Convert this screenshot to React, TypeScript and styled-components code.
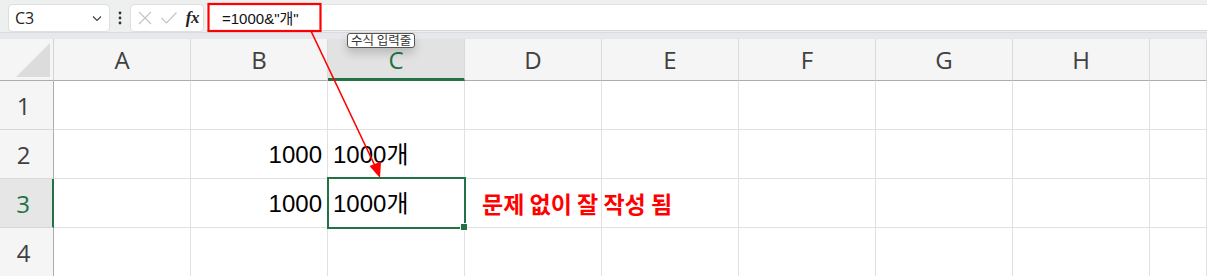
import React from "react";
import styled, { createGlobalStyle } from "styled-components";

const GlobalStyle = createGlobalStyle`
  html, body {
    margin: 0;
    padding: 0;
    background: #ffffff;
    overflow: hidden;
  }
  * {
    box-sizing: border-box;
  }
`;

const COLUMNS = ["A", "B", "C", "D", "E", "F", "G", "H", ""];
const SELECTED_COL = "C";
const SELECTED_ROW = 3;

type Row = { n: number; b?: string; c?: string; note?: string };
const ROWS: Row[] = [
  { n: 1 },
  { n: 2, b: "1000", c: "1000개" },
  { n: 3, b: "1000", c: "1000개", note: "문제 없이 잘 작성 됨" },
  { n: 4 },
];

const Page = styled.div`
  position: relative;
  width: 1207px;
  height: 276px;
  overflow: hidden;
  background: #ffffff;
`;

const FormulaBar = styled.div`
  display: flex;
  align-items: flex-start;
  height: 32px;
  padding: 4px 0 0 8px;
  background: #eef0ef;
`;

const NameBox = styled.div`
  display: flex;
  align-items: center;
  justify-content: space-between;
  width: 102px;
  height: 28px;
  padding: 0 6px 0 6px;
  background: #ffffff;
  border: 1px solid #dcdfde;
  border-radius: 4px;
  font-family: "Open Sans", sans-serif;
  font-size: 16px;
  color: #222;
`;

const MoreDots = styled.div`
  width: 20px;
  height: 28px;
  display: flex;
  align-items: center;
  justify-content: center;
`;

const FxButtons = styled.div`
  display: flex;
  align-items: center;
  justify-content: space-between;
  width: 74px;
  height: 28px;
  padding: 0 4px 0 6px;
  background: #ffffff;
  border: 1px solid #dcdfde;
  border-radius: 4px;
`;

const FxLabel = styled.span`
  font-family: "Liberation Serif", serif;
  font-style: italic;
  font-weight: bold;
  font-size: 17px;
  color: #222;
  letter-spacing: -0.5px;
`;

const FormulaInput = styled.div`
  flex: 1;
  height: 27px;
  margin-left: 2px;
  padding-left: 16px;
  display: flex;
  align-items: center;
  background: #ffffff;
  border-top: 1px solid #e2e4e3;
  border-bottom: 1px solid #d6d8d7;
  font-family: "Liberation Sans", "Noto Sans CJK KR", sans-serif;
  font-size: 15px;
  color: #111;
`;

const Band = styled.div`
  height: 7px;
  background: #e7e8ee;
  border-top: 1px solid #dadcdc;
`;

const Sheet = styled.div`
  display: grid;
  grid-template-columns: 54px repeat(8, 137px) 1fr;
  grid-template-rows: 42px repeat(4, 49px);
`;

const Corner = styled.div`
  background: #f5f5f5;
  border-right: 1px solid #d4d4d4;
  border-bottom: 1px solid #acacac;
  display: flex;
  align-items: flex-end;
  justify-content: flex-end;
  padding: 0 3px 3px 0;
`;

const ColHeader = styled.div<{ $selected?: boolean }>`
  display: flex;
  align-items: center;
  justify-content: center;
  background: ${(p) => (p.$selected ? "#e2e2e2" : "#f5f5f5")};
  border-right: 1px solid #dadada;
  border-bottom: ${(p) => (p.$selected ? "3px solid #217346" : "1px solid #acacac")};
  padding-top: ${(p) => (p.$selected ? "2px" : "0")};
  font-family: "Open Sans", sans-serif;
  font-size: 24px;
  line-height: 24px;
  color: ${(p) => (p.$selected ? "#217346" : "#404040")};
`;

const RowHeader = styled.div<{ $selected?: boolean }>`
  display: flex;
  align-items: center;
  justify-content: center;
  padding-right: 6px;
  background: ${(p) => (p.$selected ? "#e6e6e6" : "#f5f5f5")};
  border-right: ${(p) => (p.$selected ? "2px solid #217346" : "1px solid #acacac")};
  border-bottom: 1px solid #d8d8d8;
  font-family: "Open Sans", sans-serif;
  font-size: 24px;
  color: ${(p) => (p.$selected ? "#217346" : "#404040")};
`;

const Cell = styled.div<{ $align?: "left" | "right"; $active?: boolean }>`
  position: relative;
  display: flex;
  align-items: center;
  justify-content: ${(p) => (p.$align === "right" ? "flex-end" : "flex-start")};
  padding: 2px 5px 0 5px;
  border-right: 1px solid #e1e1e1;
  border-bottom: 1px solid #e1e1e1;
  font-family: "Liberation Sans", "Noto Sans CJK KR", sans-serif;
  font-size: 24px;
  line-height: 28px;
  color: #000;
  white-space: nowrap;
  overflow: visible;
  z-index: ${(p) => (p.$active ? 2 : 1)};
`;

const CellText = styled.span`
  display: block;
  height: 28px;
  line-height: 28px;
`;

const ActiveFrame = styled.div`
  position: absolute;
  top: -2px;
  left: -1px;
  right: -2px;
  bottom: -2px;
  border: 2px solid #217346;
  pointer-events: none;
`;

const FillHandle = styled.div`
  position: absolute;
  right: -4px;
  bottom: -4px;
  width: 6px;
  height: 6px;
  background: #217346;
  border: 1px solid #ffffff;
  box-sizing: content-box;
`;

const Note = styled.span`
  position: relative;
  left: 12px;
  top: -1px;
  font-family: "Noto Sans CJK KR", sans-serif;
  font-weight: bold;
  font-size: 23px;
  line-height: 28px;
  color: #ff0000;
`;

const Tooltip = styled.div`
  position: absolute;
  left: 347px;
  top: 33px;
  height: 15px;
  padding: 0 3px;
  display: flex;
  align-items: center;
  background: #ffffff;
  border: 1px solid #555;
  border-radius: 3px;
  box-shadow: 0 5px 10px rgba(0, 0, 0, 0.18);
  font-family: "Noto Sans CJK KR", sans-serif;
  font-size: 12.5px;
  line-height: 1;
  color: #333;
  z-index: 5;
`;

const Annotation = styled.svg`
  position: absolute;
  left: 0;
  top: 0;
  pointer-events: none;
  z-index: 6;
`;

function ChevronDown() {
  return (
    <svg width="12" height="12" viewBox="0 0 12 12">
      <path d="M2 4.5 L6 8.5 L10 4.5" fill="none" stroke="#444" strokeWidth="1.2" />
    </svg>
  );
}

function VerticalDots() {
  return (
    <svg width="4" height="14" viewBox="0 0 4 14">
      <circle cx="2" cy="2" r="1.4" fill="#333" />
      <circle cx="2" cy="7" r="1.4" fill="#333" />
      <circle cx="2" cy="12" r="1.4" fill="#333" />
    </svg>
  );
}

function CancelIcon() {
  return (
    <svg width="16" height="16" viewBox="0 0 16 16">
      <path d="M2 2 L14 14 M14 2 L2 14" stroke="#c4c4c4" strokeWidth="1.2" fill="none" />
    </svg>
  );
}

function CheckIcon() {
  return (
    <svg width="18" height="16" viewBox="0 0 18 16">
      <path d="M1.5 8 L6.5 13 L16.5 2.5" stroke="#c4c4c4" strokeWidth="1.2" fill="none" />
    </svg>
  );
}

function CornerTriangle() {
  return (
    <svg width="34" height="34" viewBox="0 0 34 34">
      <polygon points="34,0 34,34 0,34" fill="#dcdcdc" />
    </svg>
  );
}

export default function App() {
  return (
    <>
      <GlobalStyle />
      <Page>
        <FormulaBar>
          <NameBox>
            <span>C3</span>
            <ChevronDown />
          </NameBox>
          <MoreDots>
            <VerticalDots />
          </MoreDots>
          <FxButtons>
            <CancelIcon />
            <CheckIcon />
            <FxLabel>fx</FxLabel>
          </FxButtons>
          <FormulaInput>=1000&amp;"개"</FormulaInput>
        </FormulaBar>
        <Band />
        <Sheet>
          <Corner>
            <CornerTriangle />
          </Corner>
          {COLUMNS.map((c, i) => (
            <ColHeader key={`h${i}`} $selected={c === SELECTED_COL}>
              {c}
            </ColHeader>
          ))}
          {ROWS.map((r) => (
            <React.Fragment key={r.n}>
              <RowHeader $selected={r.n === SELECTED_ROW}>{r.n}</RowHeader>
              {COLUMNS.map((c, i) => {
                const active = c === SELECTED_COL && r.n === SELECTED_ROW;
                let content: React.ReactNode = null;
                if (c === "B" && r.b) content = <CellText>{r.b}</CellText>;
                if (c === "C" && r.c) content = <CellText>{r.c}</CellText>;
                if (c === "D" && r.note) content = <Note>{r.note}</Note>;
                return (
                  <Cell key={`${r.n}-${i}`} $align={c === "B" ? "right" : "left"} $active={active}>
                    {content}
                    {active && (
                      <ActiveFrame>
                        <FillHandle />
                      </ActiveFrame>
                    )}
                  </Cell>
                );
              })}
            </React.Fragment>
          ))}
        </Sheet>
        <Tooltip>수식 입력줄</Tooltip>
        <Annotation width="1207" height="276" viewBox="0 0 1207 276">
          <rect x="208.5" y="4" width="112" height="27" fill="none" stroke="#ff0000" strokeWidth="2.2" />
          <line x1="311" y1="31" x2="376" y2="168" stroke="#ff0000" strokeWidth="1.6" />
          <polygon points="380,178 369.5,166 381,161.5" fill="#ff0000" />
        </Annotation>
      </Page>
    </>
  );
}
